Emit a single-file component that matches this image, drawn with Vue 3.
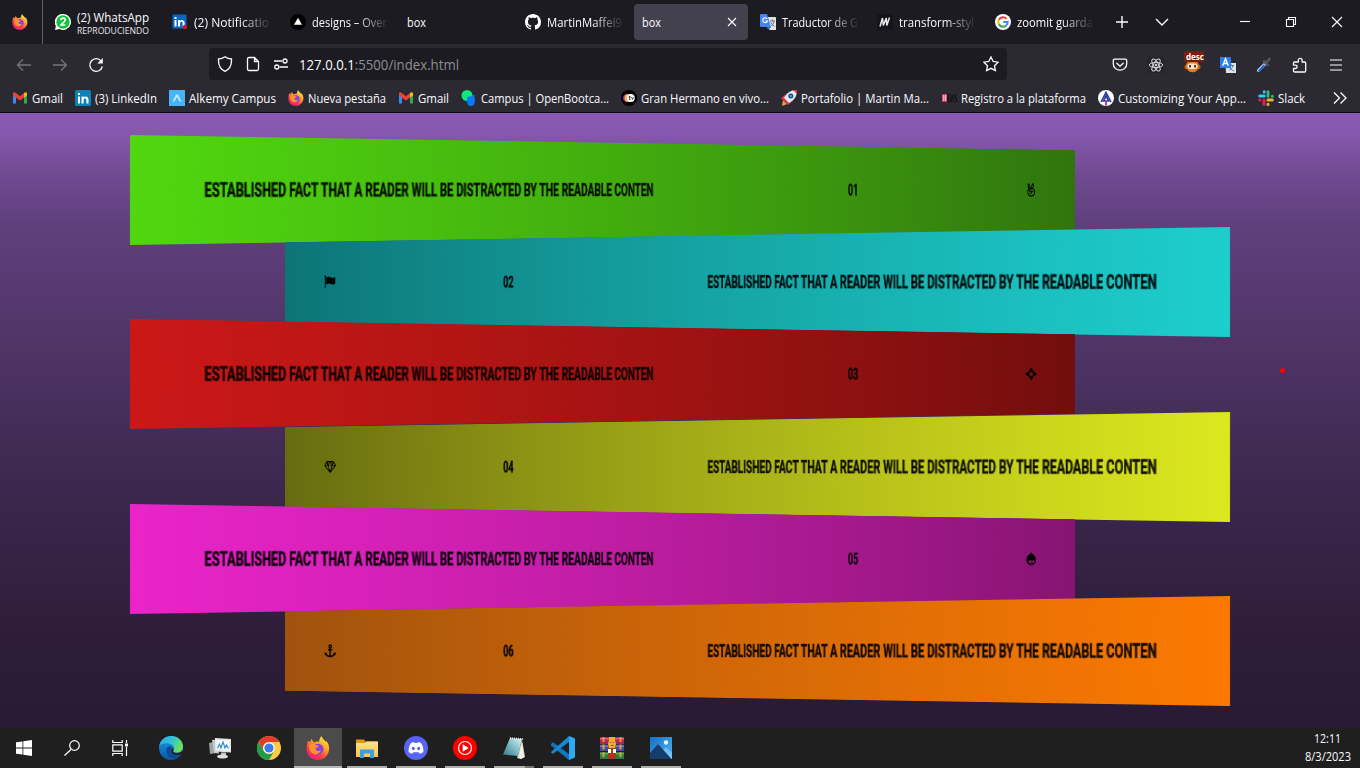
<script setup>
const tabs = [
  { icon: 'whatsapp', title: '(2) WhatsApp', sub: 'REPRODUCIENDO', w: 72 },
  { icon: 'linkedin', title: '(2) Notificatio', w: 75, fade: true },
  { icon: 'triangle', title: 'designs – Over', w: 75, fade: true },
  { title: 'box', w: 19 },
  { icon: 'github', title: 'MartinMaffei9', w: 75, fade: true },
  { title: 'box', w: 19, active: true },
  { icon: 'translate', title: 'Traductor de G', w: 76, fade: true },
  { icon: 'mdn', title: 'transform-styl', w: 75, fade: true },
  { icon: 'google', title: 'zoomit guarda', w: 76, fade: true },
]
const bookmarks = [
  { icon: 'gmail', title: 'Gmail', w: 31 },
  { icon: 'linkedin2', title: '(3) LinkedIn', w: 62 },
  { icon: 'alkemy', title: 'Alkemy Campus', w: 87 },
  { icon: 'firefox', title: 'Nueva pestaña', w: 78 },
  { icon: 'gmail', title: 'Gmail', w: 31 },
  { icon: 'campus', title: 'Campus | OpenBootca...', w: 128 },
  { icon: 'gran', title: 'Gran Hermano en vivo...', w: 128 },
  { icon: 'rocket', title: 'Portafolio | Martin Ma...', w: 128 },
  { icon: 'ideas', title: 'Registro a la plataforma', w: 125 },
  { icon: 'custom', title: 'Customizing Your App...', w: 128 },
  { icon: 'slack', title: 'Slack', w: 27 },
]
const bars = [
  { n: '01', icon: 'peace', c: 'green' },
  { n: '02', icon: 'flag', c: 'cyan' },
  { n: '03', icon: 'cross', c: 'red' },
  { n: '04', icon: 'diamond', c: 'yellow' },
  { n: '05', icon: 'drop', c: 'pink' },
  { n: '06', icon: 'anchor', c: 'orange' },
]
const extensions = ['pocket', 'react', 'monkey', 'gtrans', 'picker', 'puzzle', 'menu']
const apps = [
  { icon: 'edge' }, { icon: 'monitor' }, { icon: 'chrome' },
  { icon: 'firefox', state: 'current' }, { icon: 'folder', state: 'open' },
  { icon: 'discord', state: 'open' }, { icon: 'ytmusic', state: 'open' },
  { icon: 'notepad', state: 'open multi' }, { icon: 'vscode', state: 'open' },
  { icon: 'winrar', state: 'open' }, { icon: 'photos', state: 'open' },
]
</script>

<template>
  <div class="screen">
    <svg class="defs" aria-hidden="true">
      <defs>
        <linearGradient id="ffa" x1=".8" y1="0" x2=".2" y2="1"><stop offset="0" stop-color="#fff04a" /><stop offset=".4" stop-color="#ff9a1f" /><stop offset=".7" stop-color="#ff3b47" /><stop offset="1" stop-color="#e8158c" /></linearGradient>
        <linearGradient id="edg" x1="0" y1="0" x2="1" y2=".3"><stop offset="0" stop-color="#2aa5e8" /><stop offset=".6" stop-color="#35c6cf" /><stop offset="1" stop-color="#6be058" /></linearGradient>
        <linearGradient id="edb" x1="0" y1="0" x2="0" y2="1"><stop offset="0" stop-color="#1b9de2" /><stop offset="1" stop-color="#0b57ab" /></linearGradient>
        <linearGradient id="fol" x1="0" y1="0" x2="0" y2="1"><stop offset="0" stop-color="#ffe08a" /><stop offset="1" stop-color="#fbc64b" /></linearGradient>
        <linearGradient id="note" x1="1" y1="0" x2="0" y2="1"><stop offset="0" stop-color="#dff5f8" /><stop offset=".5" stop-color="#7fb9c4" /><stop offset="1" stop-color="#2f7787" /></linearGradient>
        <linearGradient id="pho" x1="0" y1="0" x2="1" y2="1"><stop offset="0" stop-color="#1570c6" /><stop offset="1" stop-color="#53b6f4" /></linearGradient>
      </defs>
      <symbol id="i-firefox" viewBox="0 0 24 24">
        <path fill="url(#ffa)" d="M2 5l2 1 1.500-3 2.500 3.500C10 5.300 12 5.500 13 6c.3-2.500 1-4.500 2.500-6 .5 2.500 3 4 4.500 6l.5-1c2 3 3 5.500 2.500 9-.8 6-5.500 10-11.200 10C5.500 24 1 19.500.7 13.500.5 10 1 7.500 2 5z" />
        <circle cx="12" cy="13.200" r="5.500" fill="#8a3fe0" />
        <path fill="#ff9330" d="M3 10c2-2.500 5-2.500 7-.5l3 .3c-.5 1.800-3.500 1.700-3.500 3.500 1 2.300 4 2.200 5.500.8-.8 3.500-5 5.500-8.500 3.500C4.500 16.500 3 13 3 10z" />
      </symbol>
      <symbol id="i-whatsapp" viewBox="0 0 16 16"><path fill="#fff" d="M8 0a8 8 0 1 1-3.700 15.100L0 16l.9-4A8 8 0 0 1 8 0z" /><circle cx="8" cy="8" r="6.700" fill="#13c143" /><path d="M5.800 6.300c0-3 4.400-2.900 4.400-.3 0 1.800-3 3.100-4.200 5h4.400" fill="none" stroke="#fff" stroke-width="1.700" /></symbol>
      <symbol id="i-linkedin" viewBox="0 0 16 16"><rect x=".5" y=".5" width="14" height="14" rx="1" fill="#0a66c2" /><path fill="#fff" d="M2.500 6h2v6.500h-2zM2.500 3h2v2h-2zM6 6h2v1c1-1.600 4.700-1.600 4.700 2v3.500h-2.100V9.300c0-2-2.500-2-2.500 0v3.200H6z" /><circle cx="13" cy="13" r="2.200" fill="#d11124" /></symbol>
      <symbol id="i-linkedin2" viewBox="0 0 16 16"><rect width="16" height="16" rx="1.500" fill="#0b83b6" /><path fill="#fff" d="M3 6.500h2v7H3zM3 3h2v2H3zM6.500 6.500h2v1c1-1.600 5-1.600 5 2v4h-2.100v-3.200c0-2.300-2.800-2.300-2.800 0v3.200H6.500z" /></symbol>
      <symbol id="i-triangle" viewBox="0 0 16 16"><circle cx="8" cy="8" r="8" fill="#000" /><path fill="#fff" d="M8 3.800l4 7H4z" /></symbol>
      <symbol id="i-github" viewBox="0 0 16 16"><path fill="#fff" d="M8 0C3.580 0 0 3.580 0 8c0 3.540 2.290 6.530 5.470 7.590.4.070.55-.17.55-.38 0-.19-.01-.82-.01-1.490-2.010.37-2.530-.49-2.690-.94-.09-.23-.48-.94-.82-1.130-.28-.15-.68-.52-.01-.53.63-.01 1.080.58 1.230.82.72 1.210 1.870.87 2.330.66.070-.52.28-.87.51-1.070-1.780-.2-3.640-.89-3.640-3.950 0-.87.31-1.590.82-2.150-.08-.2-.36-1.020.08-2.120 0 0 .67-.21 2.200.82.64-.18 1.320-.27 2-.27s1.360.09 2 .27c1.530-1.040 2.200-.82 2.200-.82.44 1.100.16 1.920.08 2.120.51.56.82 1.270.82 2.150 0 3.070-1.870 3.750-3.650 3.950.29.25.54.73.54 1.480 0 1.070-.01 1.930-.01 2.200 0 .21.15.46.55.38A8.010 8.010 0 0 0 16 8c0-4.420-3.580-8-8-8z" /></symbol>
      <symbol id="i-translate" viewBox="0 0 16 16"><path fill="#e2e2e2" d="M7 3h8.200l.8.800V16H9.500z" /><path d="M10 7h5M12.500 5.500V7M14 7.500c-.5 2.500-2 4-3.500 5M11 8.500c.8 1.800 2 3 3.500 4" fill="none" stroke="#68717b" /><path fill="#4384f3" d="M.7 0H7l4 13H.7L0 12V.7z" /><path d="M7.200 5A2.400 2.400 0 1 0 7.400 7H5.300" fill="none" stroke="#fff" stroke-width="1.100" /><path fill="#3367d6" d="M7 13h4l-3 3z" /></symbol>
      <symbol id="i-mdn" viewBox="0 0 16 16"><path fill="#15141a" d="M0 0h16v16H0z" /><path fill="none" stroke="#e8e8e8" stroke-width="1.500" d="M3 12.500L5.500 4 6.300 11.500 9.300 4 9.800 11.500 12.500 3.500" /></symbol>
      <symbol id="i-google" viewBox="0 0 16 16"><circle cx="8" cy="8" r="8" fill="#fff" /><g fill="none" stroke-width="2.100"><path stroke="#ea4335" d="M3.900 5.800A4.700 4.700 0 0 1 11.500 4.800" /><path stroke="#fbbc05" d="M3.900 10.200a4.700 4.700 0 0 1 0-4.400" /><path stroke="#34a853" d="M3.900 10.200a4.700 4.700 0 0 0 7.400 1.200" /><path stroke="#4285f4" d="M8.200 8h4.500c0 1.500-.5 2.600-1.400 3.400" /></g></symbol>
      <symbol id="i-gmail" viewBox="0 0 16 16"><path fill="#4285f4" d="M1 4v9.500h3V7z" /><path fill="#34a853" d="M15 4v9.500h-3V7z" /><path fill="#ea4335" d="M1 3.500C1 2 2.500 1.800 3.500 2.700L8 6.300l4-3.300v4.500L8 10.500 1 5.500z" /><path fill="#fbbc05" d="M12 3c1.500-1.300 3-.8 3 .8v1.700l-3 2z" /></symbol>
      <symbol id="i-alkemy" viewBox="0 0 16 16"><path fill="#47b4f5" d="M0 0h16v16H0z" /><path d="M3.500 11.500l3.500-7h2l3.500 7h-2L8 7l-2.500 4.500z" fill="#b9ebff" /></symbol>
      <symbol id="i-campus" viewBox="0 0 16 16"><circle cx="6" cy="5.500" r="5.500" fill="#10e57e" /><path fill="#0b78f6" d="M6 9.500c0-2 1-3 2.500-3H10L12 5h1.500v3l.5 2c0 3-1 6-4 6s-4-2-4-6.500z" /></symbol>
      <symbol id="i-gran" viewBox="0 0 16 16"><circle cx="8" cy="8" r="8" fill="#000" /><circle cx="6" cy="8" r="4" fill="#9921c6" /><circle cx="7.500" cy="8" r="4" fill="#ffb22c" /><circle cx="9.800" cy="8" r="4" fill="#fff" /><path d="M7.500 7h2.500M8.500 6v3.500h1.200M10.500 7l1 2.500L12.500 7" fill="none" stroke="#333" stroke-width=".8" /></symbol>
      <symbol id="i-rocket" viewBox="0 0 16 16"><path fill="#f3a51f" d="M2 10l4 4-5 2z" /><path fill="#e2314c" d="M0 8l5-4 7 7-5 4z" /><path fill="#dceaf3" d="M3 8C6 3 9 0 16 0c0 7-3 10-8 13z" /><path fill="#e2314c" d="M12 0h4v4z" /><circle cx="9.800" cy="6" r="2.500" fill="#234b79" /><circle cx="9.800" cy="6" r="1" fill="#55b8e7" /></symbol>
      <symbol id="i-ideas" viewBox="0 0 16 16"><path fill="#d8345f" d="M1 4h5v8H1z" /><path d="M2.300 5v6M4 5.300h.8v5.400H4z" fill="none" stroke="#ffdce5" stroke-width=".8" /><path fill="none" stroke="#121116" stroke-width="1.200" d="M9.500 4.500H7v7h2.500M7 8h2M10 12l1.200-7.500L12.500 12M15.500 4.500H14V8h1.500v3.500H13.500" /></symbol>
      <symbol id="i-custom" viewBox="0 0 16 16"><circle cx="8" cy="8" r="8" fill="#fff" /><path fill="none" stroke="#30349b" stroke-width="1.600" d="M3 12L8 2.500 13 12M5.500 11L8 6l2.500 5z" /><path fill="#d82c65" d="M7 12h2v3.500H7z" /></symbol>
      <symbol id="i-slack" viewBox="0 0 16 16"><g fill="none" stroke-width="3" stroke-linecap="round"><path stroke="#36c5f0" d="M1.700 6h4.500M6.200 1.700v.2" /><path stroke="#2eb67d" d="M10 1.700v4.500M14.300 6.200h.1" /><path stroke="#ecb22e" d="M14.300 10H10M10 14.300v.1" /><path stroke="#e01e5a" d="M6 14.300V10M1.700 10h.2" /></g></symbol>

      <symbol id="i-pocket" viewBox="0 0 16 16"><path d="M2.500 2.200h11c.7 0 1.200.5 1.200 1.200V7a6.700 6.200 0 0 1-13.400 0V3.400c0-.7.5-1.200 1.200-1.200z" fill="none" stroke="#fbfbfe" stroke-width="1.300" /><path d="M4.800 6.200L8 9.200l3.200-3" fill="none" stroke="#fbfbfe" stroke-width="1.300" stroke-linecap="round" /></symbol>
      <symbol id="i-react" viewBox="0 0 16 16"><path fill="#24232b" d="M0 0h16v16H0z" /><g fill="none" stroke="#d6d6da"><ellipse cx="8" cy="8" rx="6.700" ry="2.600" /><ellipse cx="8" cy="8" rx="6.700" ry="2.600" transform="rotate(60 8 8)" /><ellipse cx="8" cy="8" rx="6.700" ry="2.600" transform="rotate(120 8 8)" /></g><circle cx="8" cy="8" r="1.300" fill="#d0d0d0" /></symbol>
      <symbol id="i-monkey" viewBox="0 0 20 22"><circle cx="3" cy="16" r="2.500" fill="#c95d15" /><circle cx="14" cy="16" r="2.500" fill="#c95d15" /><circle cx="8.500" cy="15" r="6.300" fill="#e67a20" /><rect x="3.500" y="12.500" width="10" height="5.500" rx="2.700" fill="#ffe8d6" /><rect x="5" y="14" width="2" height="2.500" fill="#6a351c" /><rect x="10" y="14" width="2" height="2.500" fill="#6a351c" /><rect width="20" height="11" rx="1.500" fill="#762009" /><text x="2" y="9" font-family="Open Sans, sans-serif" font-size="9" font-weight="700" fill="#fff" textLength="18" lengthAdjust="spacingAndGlyphs">desc</text></symbol>
      <symbol id="i-gtrans" viewBox="0 0 16 16"><path fill="#dce5ea" d="M5.500 6H16v10H6z" /><path d="M8 8.500h6M11 7v2M13 9c-.5 2-2 3-3.500 4M9 10c1 2 3 3 5 4" fill="none" stroke="#568295" /><path fill="#2d7cec" d="M0 0h11v11H0z" /><path d="M2.700 8.700l2.800-7 2.800 7M3.800 6.500h3.500" fill="none" stroke="#fff" stroke-width="1.400" /></symbol>
      <symbol id="i-picker" viewBox="0 0 16 16"><path d="M9.500 6.500L2.500 13.500" stroke="#d9e5ff" stroke-width="3" stroke-linecap="round" /><path d="M8.500 8l-6 6.500" stroke="#245ed3" stroke-width="2" /><path d="M8 4.500l3.500 3.500M10 6l3.500-4" stroke="#56575c" stroke-width="2.600" stroke-linecap="round" /></symbol>
      <symbol id="i-puzzle" viewBox="0 0 16 16"><path d="M2.500 5h3.800V3.200a1.900 1.900 0 0 1 3.800 0V5h2.400c.7 0 1.200.5 1.200 1.200v7.600c0 .7-.5 1.200-1.200 1.200H2.700c-.7 0-1.200-.5-1.200-1.200v-2.300h2a1.600 1.600 0 0 0 0-3.300h-2V6c0-.6.400-1 1-1z" fill="none" stroke="#fbfbfe" stroke-width="1.300" stroke-linejoin="round" /></symbol>
      <symbol id="i-menu" viewBox="0 0 16 16"><path d="M2 3.500h12M2 8.500h12M2 13.500h12" transform="translate(0 -.5)" stroke="#fbfbfe" stroke-width="1.200" /></symbol>

      <symbol id="i-edge" viewBox="0 0 24 24"><circle cx="12" cy="12" r="12" fill="url(#edb)" /><path fill="url(#edg)" d="M.3 10C1.500 4 6.500 0 12 0c7 0 12 5 12 10.500 0 4-3 6-6 6-2.500 0-4.300-1-3.500-2.300 1.300-2 .4-5.500-3.500-6.500C6.500 6.500 1.500 8 .3 10z" /><path fill="#0c4b93" d="M8.500 11c-2 3-1.500 8 3 10.500 4 2 8 .5 10.500-3-4 2-9 1-10-2.500-.5-1.800 0-3.500 1-4.500-1-1.500-3-1.500-4.500-.5z" /><path fill="#1f1f1f" d="M14.500 14.200c-1.500 2 1.500 3.500 4.500 2.800 2-.4 3.500-1 4.500-2.500v3c-5 3-11 1.500-11.300-2.500 0-1.500.5-2.500 1.200-3 .8 0 1.500 1.400 1.100 2.200z" /></symbol>
      <symbol id="i-monitor" viewBox="0 0 24 24"><path fill="#9ea2a5" d="M1 7l5-1 2 11-6 1z" /><path fill="#c5c8ca" d="M4 4l5-.5 2 14-5-.5z" /><path fill="#e2e4e5" d="M7 2l16 1v13.500l-16-1z" /><path fill="#f3f9fc" d="M8.500 3.800l13 .8v10L8.500 14z" /><path d="M9.500 12l2-4 1.500 4 2-6 2 6 1.500-3 2 3.500" fill="none" stroke="#3389c6" stroke-width="1.100" /><path fill="#bfc3c5" d="M13 16.500h5v3h-5z" /><ellipse cx="14.500" cy="20.500" rx="5.500" ry="2" fill="#dcdedf" /></symbol>
      <symbol id="i-chrome" viewBox="0 0 24 24"><circle cx="12" cy="12" r="12" fill="#fc4" /><path fill="#e33b2e" d="M1.600 6A12 12 0 0 1 22.400 6H12a6 6 0 0 0-5.200 9z" /><path fill="#229b4d" d="M1.600 6A12 12 0 0 0 12 24l5.200-9A6 6 0 0 1 6.800 15z" /><circle cx="12" cy="12" r="5.800" fill="#fff" /><circle cx="12" cy="12" r="4.600" fill="#397ee9" /></symbol>
      <symbol id="i-folder" viewBox="0 0 24 24"><path fill="#d99a12" d="M1 3.500h8l1.500 2H22V9H1z" /><path fill="url(#fol)" d="M1 7h9l1.500-1.500H23V21H1z" /><path fill="#3c9fe2" d="M5 13.500h14V22h-4v-4.500H9V22H5z" /></symbol>
      <symbol id="i-discord" viewBox="0 0 24 24"><circle cx="12" cy="12" r="12" fill="#5865f2" /><path fill="#fff" d="M7 7l3-1 .6 1h2.800l.6-1 3 1c2 3 2.700 6 2.400 9-1.300 1-2.500 1.500-3.700 1.800l-1-1.600H9.300l-1 1.600C7 17.500 5.800 17 4.600 16 4.300 13 5 10 7 7z" /><ellipse cx="9.300" cy="12.500" rx="1.500" ry="1.700" fill="#5865f2" /><ellipse cx="14.700" cy="12.500" rx="1.500" ry="1.700" fill="#5865f2" /></symbol>
      <symbol id="i-ytmusic" viewBox="0 0 24 24"><circle cx="12" cy="12" r="12" fill="#f00" /><circle cx="12" cy="12" r="6.500" fill="none" stroke="#fff" stroke-width="1.200" /><path fill="#fff" d="M9.700 8.200l6 3.800-6 3.800z" /></symbol>
      <symbol id="i-notepad" viewBox="0 0 24 24"><path fill="#d8d5c7" d="M20 4l3 17-4 2-4-1z" /><path fill="url(#note)" d="M8 2l12 1-4 17-15-1.500z" /><path d="M8 2l13 1" stroke="#edf4f4" stroke-width="1.500" stroke-dasharray="1 1" /><path fill="#f3f2e9" d="M17 21l3-15 2 15-3 2z" /></symbol>
      <symbol id="i-vscode" viewBox="0 0 24 24"><path fill="#0f75bf" d="M0 8l2-1.700L18 18v6L0 9.500z" /><path fill="#1689d2" d="M0 16L18 0v6L2 17.700 0 16.500z" /><path fill="#2cabf1" d="M18 0l6 2.500v19L18 24z" /></symbol>
      <symbol id="i-winrar" viewBox="0 0 24 24"><path fill="#b62552" d="M0 1h24v7H0z" /><path fill="#e3628a" d="M0 2h24v1.500H0z" /><path fill="#4549a3" d="M0 8.500h24V15H0z" /><path fill="#7379c7" d="M0 9.500h24V11H0z" /><path fill="#287c3e" d="M0 16h24v7H0z" /><path fill="#58aa57" d="M0 17h24v1.500H0z" /><path d="M3.500 1v22M20.500 1v22" stroke="#d5a13c" stroke-width="2" stroke-dasharray="5 2.500" /><path fill="#8c4a1c" d="M8 9h8v14H8z" /><path fill="#efae31" d="M9 1h6v3l1 4-1 4H9L8 8l1-4z" /><path d="M10.500 6.500h1M13 6.500h1M11 9.500h2.500" stroke="#8c4a1c" /><path fill="#fff" d="M8 13h3v4H8zM13 13h3v4h-3z" /><path fill="#b7301f" d="M9 17h6v6H9z" /></symbol>
      <symbol id="i-photos" viewBox="0 0 24 24"><path fill="url(#pho)" d="M1 1h22v22H1z" /><circle cx="17" cy="6.500" r="2.200" fill="#e5f5ff" /><path fill="#8ac9f2" d="M12 16l5-5 6 6v6H12z" opacity=".7" /><path fill="#153d6e" d="M1 17l8-9 13.500 15H1z" /></symbol>

      <symbol id="i-peace" viewBox="0 0 16 16"><path d="M5.200 8L3.600 2.200C3.300.6 5 .3 5.400 1.600L7 6.500M8 6.500l1.500-5c.5-1.400 2.100-.8 1.800.5L10 7M4.600 8C3.500 8 3 9.500 3.300 11c.4 3 2 4.300 4.800 4.300 3.200 0 4.600-2.300 4.600-5 0-1.800-.6-3-2-3.300-3-.6-5 .2-6.100 1zM6 8.500c1 1.500 3 .3 3.800 1.500-1 1.200-2.600 1.300-2.800 3M6 8.500v2.300" fill="none" stroke="#000" stroke-width="1.300" /></symbol>
      <symbol id="i-flag" viewBox="0 0 16 16"><path d="M1.300 1v14" stroke="#000" stroke-width="1.300" /><circle cx="1.300" cy="1.500" r="1.200" /><path d="M2.500 2.500c3-1.500 5-.8 7 .2 2 .8 4 .3 5.500-.5v8c-2 1.300-4 1.200-6 .3-2-1-4-.6-6.500.8z" /></symbol>
      <symbol id="i-cross" viewBox="0 0 16 16"><path d="M8 2.800L13.200 8 8 13.200 2.800 8z" fill="none" stroke="#000" stroke-width="1.500" /><path d="M8 0l2 2.500v3H6v-3zM8 16l2-2.500v-3H6v3zM0 8l2.500-2h3v4h-3zM16 8l-2.500-2h-3v4h3z" /></symbol>
      <symbol id="i-diamond" viewBox="0 0 16 16"><path d="M3.500 1.500h9L15.500 6 8 14.500.5 6zM.5 6h15M3.500 1.500L5 6l3 8.500L11 6l1.500-4.500M5 6l3-4.500L11 6" fill="none" stroke="#000" stroke-width="1.100" stroke-linejoin="round" /></symbol>
      <symbol id="i-drop" viewBox="0 0 16 16"><path d="M8 0c1 2 6.500 3.500 6.500 9 0 4-3 6.500-6.500 6.500S1.500 13 1.500 9C1.500 3.500 7 2 8 0z" /><path fill="#8a1778" d="M4.500 11.500c0-2.500 3-2.500 4.500-1 1-.8 3.500-1.800 3.500.8-.3 2.200-2 1.500-3.500.5-1.500 1.300-4.500 1.800-4.500-.3zM6.800 14.200c1-.8 3-.8 4 0-1 .7-3 .7-4 0z" /></symbol>
      <symbol id="i-anchor" viewBox="0 0 16 16"><circle cx="8" cy="2.500" r="1.700" fill="none" stroke="#000" stroke-width="1.400" /><path d="M8 4v10.500M4.800 6.500h6.400M1.500 10.500c.8 3 3.500 4 6.500 4s5.700-1 6.500-4" fill="none" stroke="#000" stroke-width="1.900" /><path d="M.5 13V9l3.700 2.500zM15.500 13V9l-3.700 2.500z" /></symbol>
    </svg>

    <header class="tabbar">
      <div class="pinned"><svg class="i16"><use href="#i-firefox" /></svg></div>
      <div v-for="(t, i) in tabs" :key="i" class="tab" :class="{ active: t.active }">
        <svg v-if="t.icon" class="i16"><use :href="'#i-' + t.icon" /></svg>
        <div class="tab-text" :class="{ fade: t.fade }">
          <svg class="label" :width="t.w" height="16"><text x="0" y="12" :textLength="t.w" lengthAdjust="spacingAndGlyphs">{{ t.title }}</text></svg>
          <svg v-if="t.sub" class="sub" width="73" height="11"><text x="0" y="9" textLength="72" lengthAdjust="spacingAndGlyphs">{{ t.sub }}</text></svg>
        </div>
        <svg v-if="t.active" class="close" viewBox="0 0 10 10"><path d="M1 1l8 8M9 1L1 9" /></svg>
      </div>
      <div class="tab-tools">
        <svg viewBox="0 0 14 14"><path d="M7 1v12M1 7h12" /></svg>
        <svg viewBox="0 0 14 14"><path d="M1 4l6 6 6-6" /></svg>
      </div>
      <div class="window-tools">
        <svg viewBox="0 0 12 12"><path d="M1 5.500h10" /></svg>
        <svg viewBox="0 0 12 12"><path d="M1.500 3.500h7v7h-7zM3.500 3.500v-2h7v7h-2" /></svg>
        <svg viewBox="0 0 12 12"><path d="M1 1l10 10M11 1L1 11" /></svg>
      </div>
    </header>

    <nav class="navbar">
      <div class="history">
        <svg class="dim" viewBox="0 0 16 16"><path d="M15 8H1.500M7 2.500L1.500 8 7 13.500" /></svg>
        <svg class="dim" viewBox="0 0 16 16"><path d="M1 8h13.500M9 2.500L14.500 8 9 13.500" /></svg>
        <svg viewBox="0 0 16 16"><path d="M13.200 4.200A6.300 6.300 0 1 0 14.300 9.500" /><path d="M14.800 1v5.500H9.300z" fill="#fbfbfe" stroke="none" /></svg>
      </div>
      <div class="urlbar">
        <svg viewBox="0 0 16 16"><path d="M8 .8C10 2.300 12 3 14.500 3c.3 5.500-1 10-6.500 12.300C2.500 13 1.200 8.500 1.500 3 4 3 6 2.300 8 .8z" /></svg>
        <svg viewBox="0 0 16 16"><path d="M4 1.500h5.500L13.500 5.500V13c0 1-.5 1.500-1.500 1.500H4c-1 0-1.500-.5-1.500-1.500V3c0-1 .5-1.500 1.500-1.500zM9.500 1.500v4h4" /></svg>
        <svg viewBox="0 0 16 16"><path d="M1 5h8M6.500 11H15" /><circle cx="12" cy="5" r="2" /><circle cx="3.800" cy="11" r="2" /></svg>
        <svg class="url" width="161" height="20"><text x="0" y="16" textLength="160" lengthAdjust="spacingAndGlyphs">127.0.0.1<tspan fill="#8f8f96">:5500/index.html</tspan></text></svg>
        <svg class="star" viewBox="0 0 16 16"><path d="M8 1l2.200 4.500 4.900.7-3.600 3.500.9 4.900L8 12.300l-4.400 2.300.9-4.900L.9 6.200l4.900-.7z" /></svg>
      </div>
      <div class="extensions">
        <svg v-for="e in extensions" :key="e" :class="e === 'monkey' ? 'i-wide' : 'i16'"><use :href="'#i-' + e" /></svg>
      </div>
    </nav>

    <div class="bookmarks">
      <div v-for="(b, i) in bookmarks" :key="i" class="bookmark">
        <svg class="i16"><use :href="'#i-' + b.icon" /></svg>
        <svg class="label" :width="b.w" height="16"><text x="0" y="13" :textLength="b.w" lengthAdjust="spacingAndGlyphs">{{ b.title }}</text></svg>
      </div>
      <svg class="more" viewBox="0 0 14 14"><path d="M1 1.500L6.500 7 1 12.500M7.500 1.500L13 7l-5.500 5.500" /></svg>
    </div>

    <main class="page">
      <section class="stack">
        <div v-for="b in bars" :key="b.n" class="row">
          <article class="bar" :class="b.c">
            <svg class="title" width="456" height="24"><text x="0" y="19" textLength="456" lengthAdjust="spacingAndGlyphs">ESTABLISHED FACT THAT A READER WILL BE DISTRACTED BY THE READABLE CONTEN</text></svg>
            <svg class="number" width="14" height="24"><text x="0" y="19" textLength="14" lengthAdjust="spacingAndGlyphs">{{ b.n }}</text></svg>
            <svg class="glyph"><use :href="'#i-' + b.icon" /></svg>
          </article>
        </div>
      </section>
      <i class="pointer"></i>
    </main>

    <footer class="taskbar">
      <div class="system">
        <svg viewBox="0 0 16 16"><path fill="#fff" d="M0 2.300L6.500 1.400v6.200H0zM7.300 1.300L16 0v7.600H7.300zM0 8.400h6.500v6.200L0 13.700zM7.300 8.400H16V16l-8.700-1.300z" /></svg>
        <svg viewBox="0 0 16 16"><path class="ln" d="M7 9.500L.5 15.500" /><circle class="ln" cx="10.500" cy="5.500" r="4.800" /></svg>
        <svg viewBox="0 0 16 16"><path class="ln" d="M.8 0v2.500h9.400V0M.8 16v-2.500h9.400V16M.8 4.800h9.400v6.400H.8zM14.500 0v3M14.500 7v9" /><path fill="#fff" d="M13 3.500h3v3h-3z" /></svg>
      </div>
      <div v-for="(a, i) in apps" :key="i" class="app" :class="a.state"><svg><use :href="'#i-' + a.icon" /></svg></div>
      <div class="clock">
        <svg class="label" width="28" height="16"><text x="0" y="12" textLength="27" lengthAdjust="spacingAndGlyphs">12:11</text></svg>
        <svg class="label" width="46" height="16"><text x="0" y="12" textLength="46" lengthAdjust="spacingAndGlyphs">8/3/2023</text></svg>
      </div>
    </footer>
  </div>
</template>

<style>
html, body { overflow: hidden; background: #1c1b22; }
</style>

<style scoped>
.screen { width: 1360px; height: 768px; display: flex; flex-direction: column; overflow: hidden; font-family: "Open Sans", "Noto Sans", sans-serif; }
svg { display: block; flex: none; }
.defs { position: absolute; width: 0; height: 0; }
.i16 { width: 16px; height: 16px; }
.label { font-size: 12px; fill: #fbfbfe; overflow: visible; }
.tabbar { height: 44px; background: #1c1b22; display: flex; align-items: center; }
.pinned { width: 43px; height: 44px; margin-right: 3.500px; border-right: 1px solid #606067; display: flex; align-items: center; padding-left: 12px; box-sizing: border-box; }
.tab { width: 113.500px; height: 36px; margin-right: 4px; padding: 0 8px; box-sizing: border-box; display: flex; align-items: center; gap: 6px; border-radius: 4px; }
.tab.active { background: #42414d; }
.tab-text { flex: 1; min-width: 0; padding-top: 1px; }
.fade { -webkit-mask-image: linear-gradient(to right, #000 60%, transparent 103%); mask-image: linear-gradient(to right, #000 60%, transparent 103%); }
.sub { font-size: 9px; fill: #e5e5ea; margin-top: -1px; overflow: visible; }
.close { width: 10px; height: 10px; margin-right: 3px; }
.close path, .tab-tools path, .window-tools path { fill: none; stroke: #fbfbfe; stroke-width: 1.100; }
.tab-tools { display: flex; gap: 26px; margin-left: 10.500px; }
.tab-tools svg { width: 14px; height: 14px; }
.tab-tools path { stroke-width: 1.400; }
.window-tools { display: flex; gap: 34px; margin-left: auto; margin-right: 17px; }
.window-tools svg { width: 12px; height: 12px; }
.navbar { height: 40px; padding-top: 1px; box-sizing: border-box; background: #2b2a33; display: flex; align-items: center; }
.history { width: 193px; padding-left: 16px; display: flex; gap: 20px; }
.history svg, .urlbar svg { fill: none; stroke: #fbfbfe; stroke-width: 1.300; }
.history svg { width: 16px; height: 16px; }
.history .dim { stroke: #75747c; }
.urlbar { width: 798px; height: 32px; margin-bottom: 1px; padding: 0 8px; box-sizing: border-box; border-radius: 4px; background: #1c1b22; display: flex; align-items: center; gap: 12px; }
.urlbar svg { width: 16px; height: 16px; }
.urlbar .url { width: 161px; height: 20px; margin-left: -2px; fill: #fbfbfe; stroke: none; font-size: 14px; overflow: visible; }
.urlbar .star { margin-left: auto; }
.extensions { margin-left: auto; margin-right: 16px; display: flex; align-items: center; gap: 20px; }
.i-wide { width: 20px; height: 22px; margin: -5px -4px 0 0; }
.bookmarks { height: 28px; padding: 0 13px 0 12px; background: #2b2a33; border-bottom: 1px solid #0c0b10; display: flex; align-items: center; gap: 12px; }
.bookmark { display: flex; align-items: center; gap: 4px; }
.more { width: 14px; height: 14px; margin-left: auto; fill: none; stroke: #fbfbfe; stroke-width: 1.300; }
.page { position: relative; height: 615px; overflow: hidden; background: linear-gradient(#8c5ab5 0, #8557ae 20px, #714b92 60px, #613f7d 110px, #4f3466 235px, #3b284e 375px, #2d1d39 520px, #281a34 100%); }
.stack { width: 1100px; margin: 0 auto; padding-top: 22px; display: grid; grid-auto-rows: 92.200px; }
.row { height: 110px; }
.bar { width: 1100px; height: 110px; display: grid; grid-template-columns: 583px 376px 141px; align-items: center; justify-items: center; outline: 1px solid transparent; will-change: transform; transform-origin: 0 50%; transform: matrix3d(1.189, 0, 0, 0.000349, 0, 1, 0, 0, 0, 0, 1, 0, 0, 0, 0, 1); }
.row:nth-child(even) .bar { grid-template-columns: 141px 376px 583px; transform-origin: 100% 50%; transform: matrix3d(1.189, 0, 0, -0.000349, 0, 1, 0, 0, 0, 0, 1, 0, 0, 0, 0, 1); }
.row:nth-child(even) .title { order: 3; }
.row:nth-child(even) .number { order: 2; }
.row:nth-child(even) .glyph { order: 1; }
.title, .number { font: 700 19.300px Roboto, sans-serif; overflow: visible; fill: #000; stroke: #000; stroke-width: .55px; fill-opacity: .9; stroke-opacity: .8; }
.number { margin-left: 2px; }
.glyph { width: 19px; height: 18px; margin-left: 1px; }
.green { background: linear-gradient(90deg, #50d70f, #30740e); }
.cyan { background: linear-gradient(90deg, #0d7475, #1dcecd); }
.red { background: linear-gradient(90deg, #cb1817, #720e0d); }
.yellow { background: linear-gradient(90deg, #666b10, #dce81e); }
.pink { background: linear-gradient(90deg, #ea24c9, #861472); }
.orange { background: linear-gradient(90deg, #a0520e, #fb7902); }
.pointer { position: absolute; left: 1280px; top: 255px; width: 5px; height: 5px; border-radius: 50%; background: #f00; }
.taskbar { height: 40px; background: #1f1f1f; display: flex; }
.system { display: flex; align-items: center; gap: 32px; padding: 0 19px 0 16px; }
.system svg { width: 16px; height: 16px; }
.ln { fill: none; stroke: #fff; stroke-width: 1.200; }
.app { width: 48px; height: 40px; margin-right: 1px; display: flex; align-items: center; justify-content: center; background-repeat: no-repeat; }
.app svg { width: 24px; height: 24px; }
.current { background: linear-gradient(#b8b6b3, #b8b6b3) 0 38px / 48px 2px no-repeat #4b4b4b; }
.open { background-image: linear-gradient(#b0aea9, #b0aea9); background-size: 40px 2px; background-position: 4px 38px; }
.open.multi { background-image: linear-gradient(90deg, #b0aea9 31px, #77756f 31px); }
.clock { margin-left: auto; margin-right: 9px; display: flex; flex-direction: column; align-items: center; padding-top: 3px; gap: 2px; }
</style>
